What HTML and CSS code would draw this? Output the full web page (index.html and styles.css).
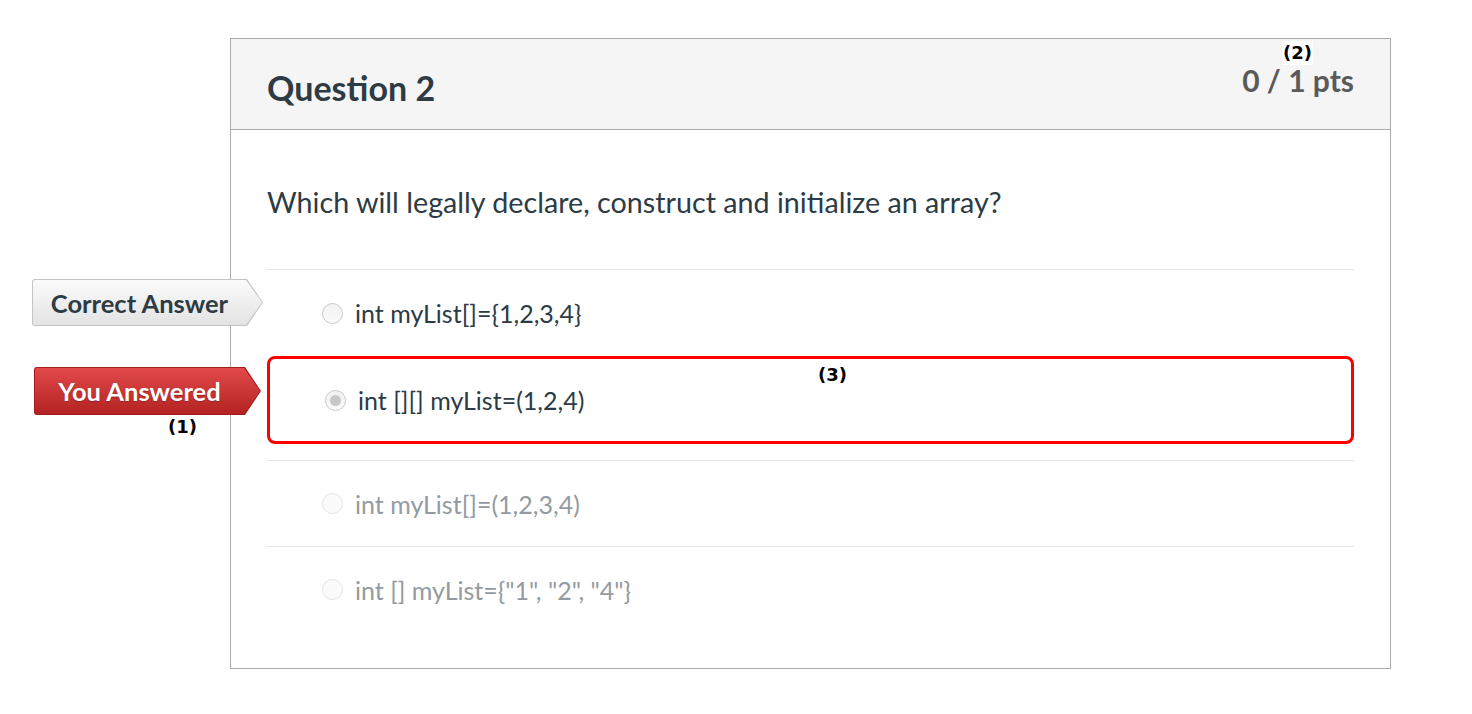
FILE: index.html
```html
<!DOCTYPE html>
<html lang="en">
<head>
<meta charset="utf-8">
<title>Question 2</title>
<link rel="stylesheet" href="styles.css">
</head>
<body>
<div class="page">
  <div class="card">
    <div class="card-header">
      <h2 class="q-title">Question 2</h2>
      <div class="q-points">0 / 1 pts</div>
      <span class="note note-2">(2)</span>
    </div>
    <div class="card-body">
      <p class="q-text">Which will legally declare, construct and initialize an array?</p>
      <div class="answers">
        <div class="answer answer-first">
          <div class="tag tag-correct"><div class="tag-inner">Correct Answer</div></div>
          <span class="radio"></span>
          <span class="answer-text">int myList[]={1,2,3,4}</span>
        </div>
        <div class="answer answer-selected">
          <div class="tag tag-wrong"><div class="tag-inner">You Answered</div></div>
          <span class="radio radio-checked"></span>
          <span class="answer-text">int [][] myList=(1,2,4)</span>
          <span class="note note-3">(3)</span>
          <span class="note note-1">(1)</span>
        </div>
        <div class="answer answer-muted">
          <span class="radio"></span>
          <span class="answer-text">int myList[]=(1,2,3,4)</span>
        </div>
        <div class="answer answer-muted">
          <span class="radio"></span>
          <span class="answer-text">int [] myList={"1", "2", "4"}</span>
        </div>
      </div>
    </div>
  </div>
</div>
</body>
</html>
```
FILE: styles.css
```css
* { box-sizing: border-box; }

body {
  margin: 0;
  background: #ffffff;
  font-family: Lato, "Noto Sans", sans-serif;
  color: #2d3b45;
}

.page {
  padding: 38px 0 0 230px;
}

.card {
  width: 1161px;
  border: 1px solid #aaaaaa;
  background: #ffffff;
}

.card-header {
  position: relative;
  height: 91px;
  padding: 0 36px;
  background: #f5f5f5;
  border-bottom: 1px solid #aaaaaa;
  display: flex;
  justify-content: space-between;
  align-items: flex-start;
}

.q-title {
  margin: 0;
  padding-top: 30px;
  font-size: 34px;
  line-height: 38px;
  font-weight: 700;
  color: #2d3b45;
}

.q-points {
  padding-top: 24px;
  font-size: 30px;
  line-height: 34px;
  font-weight: 700;
  color: #5a5a5a;
}

.card-body {
  padding: 0 36px 36px 36px;
}

.q-text {
  margin: 0;
  padding: 54px 0 49px 0;
  font-size: 28.7px;
  line-height: 36px;
  color: #2d3b45;
}

.answers {
  display: flex;
  flex-direction: column;
}

.answer {
  position: relative;
  display: flex;
  align-items: center;
  min-height: 86px;
  border-top: 1px solid #e6e6e6;
  padding-left: 55px;
  font-size: 25px;
  color: #2d3b45;
}

.answer-first {
  min-height: 87px;
}

.answer-selected {
  min-height: 88px;
  border: 3px solid #ff0000;
  border-radius: 8px;
  margin-bottom: 16px;
}

.answer-muted {
  color: #939ba1;
}

.radio {
  flex: none;
  width: 21px;
  height: 21px;
  border-radius: 50%;
  border: 1px solid #c9c9c9;
  background: linear-gradient(#f2f2f2, #fafafa);
  margin-right: 12px;
  display: flex;
  align-items: center;
  justify-content: center;
}

.answer-muted .radio {
  border-color: #e3e3e3;
  background: #fbfbfb;
}

.radio-checked::after {
  content: "";
  width: 11px;
  height: 11px;
  border-radius: 50%;
  background: #c8c8c8;
}

.answer-text {
  line-height: 30px;
}

/* Answer tags (arrow labels outside the card) */
.tag {
  position: absolute;
  padding: 1px;
  clip-path: polygon(0 0, calc(100% - 16px) 0, 100% 50%, calc(100% - 16px) 100%, 0 100%);
  border-radius: 3px;
}

.tag-inner {
  height: 100%;
  padding-right: 16px;
  display: flex;
  align-items: center;
  justify-content: center;
  font-size: 25.5px;
  font-weight: 700;
  border-radius: 2px;
  clip-path: polygon(0 0, calc(100% - 16px) 0, 100% 50%, calc(100% - 16px) 100%, 0 100%);
}

.tag-correct {
  left: -235px;
  top: 9px;
  width: 231px;
  height: 47px;
  background: #c4c4c4;
}

.tag-correct .tag-inner {
  background: linear-gradient(#fbfbfb, #e3e3e3);
  color: #2d3b45;
}

.tag-wrong {
  left: -236px;
  top: 8px;
  width: 227px;
  height: 48px;
  background: #a31d1d;
}

.tag-wrong .tag-inner {
  background: linear-gradient(#e24a4a, #b32222);
  color: #ffffff;
  text-shadow: 0 1px 1px rgba(0, 0, 0, 0.25);
}

/* Annotation markers */
.note {
  position: absolute;
  font-family: "DejaVu Sans", sans-serif;
  font-weight: 700;
  font-size: 18px;
  line-height: 20px;
  color: #000000;
}

.note-1 {
  left: -102px;
  top: 58px;
}

.note-2 {
  left: 1051px;
  top: 2px;
  padding: 2px 1px;
  background: #ffffff;
}

.note-3 {
  left: 548px;
  top: 6px;
}
```
